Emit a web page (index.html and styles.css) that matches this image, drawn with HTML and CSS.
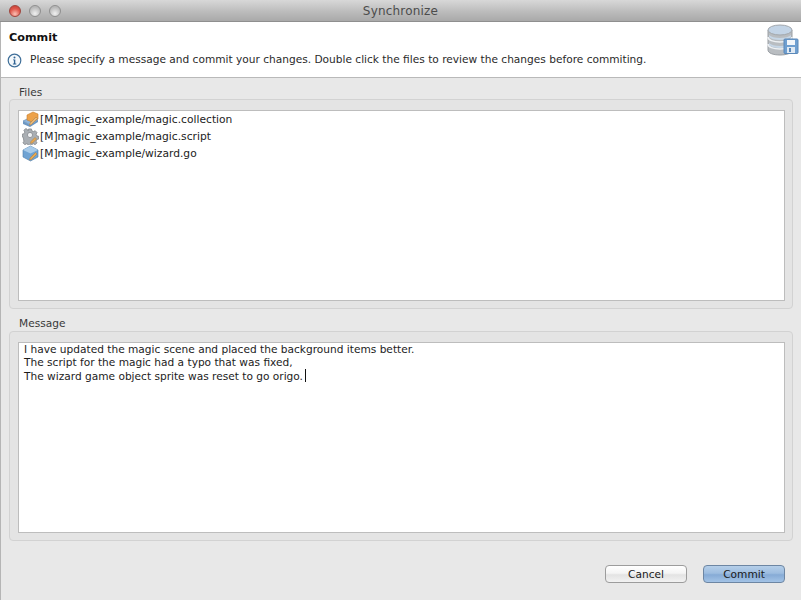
FILE: index.html
```html
<!DOCTYPE html>
<html lang="en">
<head>
<meta charset="utf-8">
<title>Synchronize</title>
<link rel="stylesheet" href="styles.css">
</head>
<body>
<div class="window">
  <header class="titlebar">
    <div class="lights">
      <span class="light light-close"></span>
      <span class="light"></span>
      <span class="light"></span>
    </div>
    <div class="title">Synchronize</div>
  </header>
  <section class="banner">
    <div class="banner-text">
      <h1 class="banner-title">Commit</h1>
      <div class="banner-info">
        <svg class="info-icon" width="15" height="15" viewBox="0 0 15 15">
          <circle cx="7.5" cy="7.5" r="6.3" fill="#f4f8fb" stroke="#3f6f99" stroke-width="1.2"/>
          <circle cx="7.5" cy="4.4" r="1" fill="#2f6393"/>
          <path d="M6 6.4h2.3v4.2h1v.9H5.900v-.9h1V7.3H6z" fill="#2f6393"/>
        </svg>
        <span>Please specify a message and commit your changes. Double click the files to review the changes before commiting.</span>
      </div>
    </div>
    <svg class="db-icon" width="32" height="34" viewBox="0 0 32 34">
      <path d="M1 7v20c0 3 5 5 12 5s12-2 12-5V7z" fill="#b9bdc1" stroke="#9a9fa4"/>
      <ellipse cx="13" cy="7" rx="12" ry="5" fill="#c3d4e6" stroke="#a3a8ad"/>
      <path d="M1 14c0 3 5 5 12 5s12-2 12-5M1 21c0 3 5 5 12 5s12-2 12-5" fill="none" stroke="#eef1f4" stroke-width="1.6"/>
      <path d="M2 12c2 2 6 3 11 3s9-1 11-3v2c-2 2-6 3-11 3s-9-1-11-3zM2 20c2 2 6 3 11 3s9-1 11-3v2c-2 2-6 3-11 3s-9-1-11-3z" fill="#c6d6e6"/>
      <rect x="17" y="16" width="14" height="14.500" rx="1" fill="#6f9fd0" stroke="#5a88b8"/>
      <rect x="20" y="17" width="8" height="5" fill="#f2f6fa"/>
      <rect x="20" y="24" width="8" height="6" fill="#dfe9f3"/>
      <rect x="22" y="25" width="2" height="4" fill="#5a88b8"/>
    </svg>
  </section>
  <main class="content">
    <section class="group group-files">
      <div class="group-label">Files</div>
      <div class="group-box">
        <ul class="file-list">
          <li class="file">
            <svg width="17" height="17" viewBox="0 0 17 17">
              <path d="M1 10l8-4 7 3-8 5z" fill="#8fb4d9" stroke="#5f88b0" stroke-width=".6"/>
              <path d="M1 10v3l7 3 8-5V9l-8 5z" fill="#6d97c2"/>
              <path d="M5 9V4l6-3 5 2v5l-6 3z" fill="#eda24a" stroke="#c67d2b" stroke-width=".6"/>
              <path d="M8 12l6-6 1.500 1.500-6 6-2.200.7z" fill="#e8b878" stroke="#a87a3e" stroke-width=".5"/>
            </svg>
            <span>[M]magic_example/magic.collection</span>
          </li>
          <li class="file">
            <svg width="17" height="17" viewBox="0 0 17 17">
              <path d="M7 1h3l.5 2 1.800.8 1.700-1 2 2-1 1.800.7 1.700 2 .5v3l-2 .5-.7 1.800 1 1.700-2 2-1.700-1-1.800.7-.5 2H7l-.5-2-1.800-.7-1.700 1-2-2 1-1.700L1.300 10l-1-.5V6.500l2-.5.700-1.700-1-1.800 2-2 1.700 1L6.500 3z" fill="#a9aeb3" stroke="#75797d" stroke-width=".7" transform="scale(.94)"/>
              <circle cx="8" cy="7" r="2.600" fill="#eef0f2" stroke="#7c8085" stroke-width=".7"/>
              <path d="M9 13.500l4-4 1.500 1.500-4 4-2 .5z" fill="#e8a850" stroke="#a87a3e" stroke-width=".5"/>
            </svg>
            <span>[M]magic_example/magic.script</span>
          </li>
          <li class="file">
            <svg width="17" height="17" viewBox="0 0 17 17">
              <path d="M1 5l7.500-4L16 5v7l-7.500 4L1 12z" fill="#6fa3d3" stroke="#4f7ca8" stroke-width=".6"/>
              <path d="M1 5l7.500 3.500L16 5l-7.500-4z" fill="#a9cbe9"/>
              <path d="M8 13l5.500-5.500 1.500 1.500-5.500 5.500-2 .5z" fill="#e8a850" stroke="#a87a3e" stroke-width=".5"/>
            </svg>
            <span>[M]magic_example/wizard.go</span>
          </li>
        </ul>
      </div>
    </section>
    <section class="group group-message">
      <div class="group-label">Message</div>
      <div class="group-box">
        <div class="message-text">
          <div>I have updated the magic scene and placed the background items better.</div>
          <div>The script for the magic had a typo that was fixed,</div>
          <div>The wizard game object sprite was reset to go origo.<span class="caret"></span></div>
        </div>
      </div>
    </section>
  </main>
  <footer class="actions">
    <button class="btn" type="button">Cancel</button>
    <button class="btn btn-primary" type="button">Commit</button>
  </footer>
</div>
</body>
</html>
```
FILE: styles.css
```css
* {
  box-sizing: border-box;
}
html,
body {
  margin: 0;
  padding: 0;
}
body {
  width: 801px;
  height: 600px;
  overflow: hidden;
  font-family: "DejaVu Sans", sans-serif;
  font-size: 10.6px;
  color: #222;
}
.window {
  width: 801px;
  height: 600px;
  display: flex;
  flex-direction: column;
  background: #e8e8e8;
  border-left: 1px solid #b5b5b5;
}
.titlebar {
  height: 22px;
  flex: none;
  display: flex;
  align-items: center;
  position: relative;
  background: linear-gradient(#d8d8d8, #bcbcbc 55%, #a9a9a9);
  border-bottom: 1px solid #8f8f8f;
  margin-left: -1px;
}
.lights {
  display: flex;
  gap: 8px;
  padding-left: 9px;
}
.light {
  width: 12px;
  height: 12px;
  border-radius: 50%;
  border: 1px solid #8f8f8f;
  background: radial-gradient(circle at 50% 75%, #f0f0f0, #b8b8b8 70%);
}
.light-close {
  border-color: #a0443c;
  background: radial-gradient(circle at 50% 80%, #fbc1b5, #e0584c 55%, #c33b30);
}
.title {
  position: absolute;
  left: 0;
  right: 0;
  text-align: center;
  font-size: 12px;
  color: #4c4c4c;
  letter-spacing: .2px;
}
.banner {
  height: 56px;
  flex: none;
  display: flex;
  justify-content: space-between;
  background: #fff;
  border-bottom: 1px solid #b9b9b9;
  padding: 0 2px 0 6px;
}
.banner-title {
  margin: 8px 0 0 2px;
  font-size: 11.2px;
  line-height: 15px;
  font-weight: bold;
  color: #111;
}
.banner-info {
  display: flex;
  align-items: center;
  gap: 8px;
  margin-top: 6px;
  line-height: 15px;
  color: #2a2a2a;
}
.info-icon {
  margin-top: 2px;
}
.db-icon {
  margin-top: 1px;
}
.content {
  flex: 1;
  display: flex;
  flex-direction: column;
  padding: 0 8px;
}
.group-label {
  height: 21px;
  padding: 7px 0 0 10px;
  line-height: 14px;
  color: #3a3a3a;
}
.group-box {
  border: 1px solid #d2d2d2;
  border-radius: 4px;
  background: #e4e4e4;
  padding: 10px 7px 7px 8px;
  height: 210px;
}
.group-message {
  margin-top: 1px;
}
.group-message .group-label {
  padding-top: 6px;
}
.file-list,
.message-text {
  height: 100%;
  background: #fff;
  border: 1px solid #bdbdbd;
}
.file-list {
  list-style: none;
  margin: 0;
  padding: 0 0 0 3px;
  font-size: 10.7px;
}
.file {
  height: 17px;
  display: flex;
  align-items: center;
  gap: 1px;
  color: #222;
}
.file span {
  padding-bottom: 1px;
}
.message-text {
  padding: 0 0 0 5px;
  line-height: 13px;
  color: #1c1c1c;
}
.caret {
  display: inline-block;
  width: 1px;
  height: 13px;
  background: #111;
  vertical-align: -2px;
  margin-left: 2px;
}
.actions {
  flex: none;
  height: 59px;
  display: flex;
  justify-content: flex-end;
  gap: 16px;
  padding: 24px 16px 0 0;
}
.btn {
  width: 82px;
  height: 18px;
  padding: 0 0 1px;
  font: 10.6px "DejaVu Sans", sans-serif;
  color: #1a1a1a;
  background: linear-gradient(#fff, #f4f4f4 45%, #e3e3e3 55%, #f2f2f2);
  border: 1px solid #9c9c9c;
  border-radius: 4px;
}
.btn-primary {
  background: linear-gradient(#b5cfe9, #9dbde0 45%, #86abd6 55%, #a3c3e6);
  border-color: #6d86a3;
}
```
